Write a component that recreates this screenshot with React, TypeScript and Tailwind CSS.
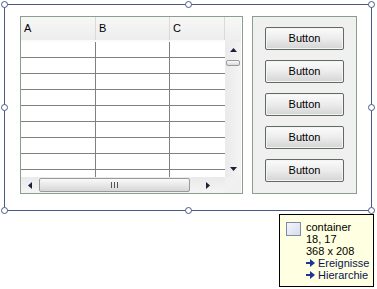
import React from "react";

const font = { fontFamily: '"Liberation Sans", Arial, sans-serif' };

function Handle({ x, y }: { x: number; y: number }) {
  return (
    <div
      className="absolute w-[7px] h-[7px] rounded-full border border-[#4a5a88] bg-white"
      style={{ left: x - 3, top: y - 3 }}
    />
  );
}

function Arrow({ dir }: { dir: "up" | "down" | "left" | "right" }) {
  const pts: Record<string, string> = {
    up: "0,4 3.5,0 7,4",
    down: "0,0 3.5,4 7,0",
    left: "4,0 0,3.5 4,7",
    right: "0,0 4,3.5 0,7",
  };
  const vertical = dir === "up" || dir === "down";
  return (
    <svg width={vertical ? 7 : 4} height={vertical ? 4 : 7} viewBox={vertical ? "0 0 7 4" : "0 0 4 7"}>
      <polygon points={pts[dir]} fill="#1a1f3a" />
    </svg>
  );
}

function LinkArrow() {
  return (
    <svg width="9" height="8" viewBox="0 0 9 8" className="inline-block mr-[3px] align-[0px]">
      <rect x="0" y="3" width="5" height="2" fill="#1c3494" />
      <polygon points="4,0 9,4 4,8" fill="#1c3494" />
    </svg>
  );
}

function Btn() {
  return (
    <div className="w-[79px] h-[23px] rounded-[2px] border border-[#5f6c5f] bg-gradient-to-b from-[#fbfbfb] via-[#ececec] to-[#d4d4d4] shadow-[inset_0_0_0_1px_#f4f4f4] flex items-center justify-center text-[11px] text-black leading-none">
      Button
    </div>
  );
}

export default function App() {
  const rows = Array.from({ length: 9 });
  const cols = [
    { label: "A", w: 75 },
    { label: "B", w: 74 },
    { label: "C", w: 55 },
  ];
  return (
    <div className="relative w-[377px] h-[289px] bg-white overflow-hidden" style={font}>
      <div className="flex gap-[9px] pt-[16px] pl-[20px]">
        {/* grid panel */}
        <div className="w-[223px] h-[178px] border border-[#8b9d8b] bg-white flex flex-col">
          <div className="flex h-[160px]">
            <div className="w-[204px] flex flex-col overflow-hidden">
              <div className="flex h-[25px] bg-gradient-to-b from-[#f7f7f7] to-[#ededed] border-b-[2px] border-[#fbfbfb]">
                {cols.map((c) => (
                  <div
                    key={c.label}
                    className="h-full flex items-center pl-[3px] text-[11px] text-black border-r border-[#d9d9d9]"
                    style={{ width: c.w }}
                  >
                    {c.label}
                  </div>
                ))}
              </div>
              <div className="flex-1 overflow-hidden">
                {rows.map((_, i) => (
                  <div key={i} className="flex h-[16px] border-b border-[#808080]">
                    {cols.map((c, j) => (
                      <div
                        key={j}
                        className={j < 2 ? "h-full border-r border-[#808080]" : "h-full"}
                        style={{ width: c.w }}
                      />
                    ))}
                  </div>
                ))}
              </div>
            </div>
            <div className="w-[16px] flex flex-col bg-[#f0f0f0]">
              <div className="h-[25px] bg-gradient-to-b from-[#f7f7f7] to-[#ededed]" />
              <div className="flex-1 flex flex-col bg-gradient-to-r from-[#eaeaea] to-[#f4f4f4]">
                <div className="h-[16px] flex items-center justify-center">
                  <Arrow dir="up" />
                </div>
                <div className="flex-1 pt-[2px] pl-[1px]">
                  <div className="w-[14px] h-[6px] rounded-[2px] border border-[#9a9a9a] bg-gradient-to-b from-[#fafafa] to-[#d8d8d8]" />
                </div>
                <div className="h-[16px] flex items-center justify-center">
                  <Arrow dir="down" />
                </div>
              </div>
            </div>
          </div>
          <div className="flex h-[16px]">
            <div className="w-[204px] flex items-center bg-gradient-to-b from-[#eaeaea] to-[#f4f4f4]">
              <div className="w-[18px] flex justify-center">
                <Arrow dir="left" />
              </div>
              <div className="w-[151px] h-[14px] rounded-[2px] border border-[#9a9a9a] bg-gradient-to-b from-[#fafafa] to-[#d6d6d6] flex items-center justify-center">
                <div className="flex gap-[2px]">
                  <div className="w-[1px] h-[6px] bg-[#555]" />
                  <div className="w-[1px] h-[6px] bg-[#555]" />
                  <div className="w-[1px] h-[6px] bg-[#555]" />
                </div>
              </div>
              <div className="flex-1 flex justify-center">
                <Arrow dir="right" />
              </div>
            </div>
            <div className="w-[16px] bg-[#f0f0f0]" />
          </div>
        </div>

        {/* button panel */}
        <div className="w-[105px] h-[178px] border border-[#8b9d8b] bg-[#f0f0f0] flex flex-col items-center pt-[10px] gap-[10px]">
          <Btn />
          <Btn />
          <Btn />
          <Btn />
          <Btn />
        </div>
      </div>

      {/* selection frame overlay */}
      <div className="absolute left-[4px] top-[4px] w-[368px] h-[207px] border border-[#4a5a88] pointer-events-none" />
      <Handle x={4} y={4} />
      <Handle x={188} y={4} />
      <Handle x={371} y={4} />
      <Handle x={4} y={107} />
      <Handle x={371} y={107} />
      <Handle x={4} y={210} />
      <Handle x={188} y={210} />
      <Handle x={371} y={210} />

      {/* tooltip */}
      <div className="absolute left-[279px] top-[214px] w-[95px] h-[73px] border border-black bg-[#ffffe1] flex pl-[6px] pt-[6px] gap-[5px]">
        <div className="mt-[1px] w-[15px] h-[14px] border border-[#7f8aa8] bg-gradient-to-br from-[#f4f6fc] to-[#d8dcec]" />
        <div className="text-[11px] leading-[12px] text-black">
          <div>container</div>
          <div>18, 17</div>
          <div>368 x 208</div>
          <div className="text-[#0a1450] whitespace-nowrap">
            <LinkArrow />
            Ereignisse
          </div>
          <div className="text-[#0a1450] whitespace-nowrap">
            <LinkArrow />
            Hierarchie
          </div>
        </div>
      </div>
    </div>
  );
}
